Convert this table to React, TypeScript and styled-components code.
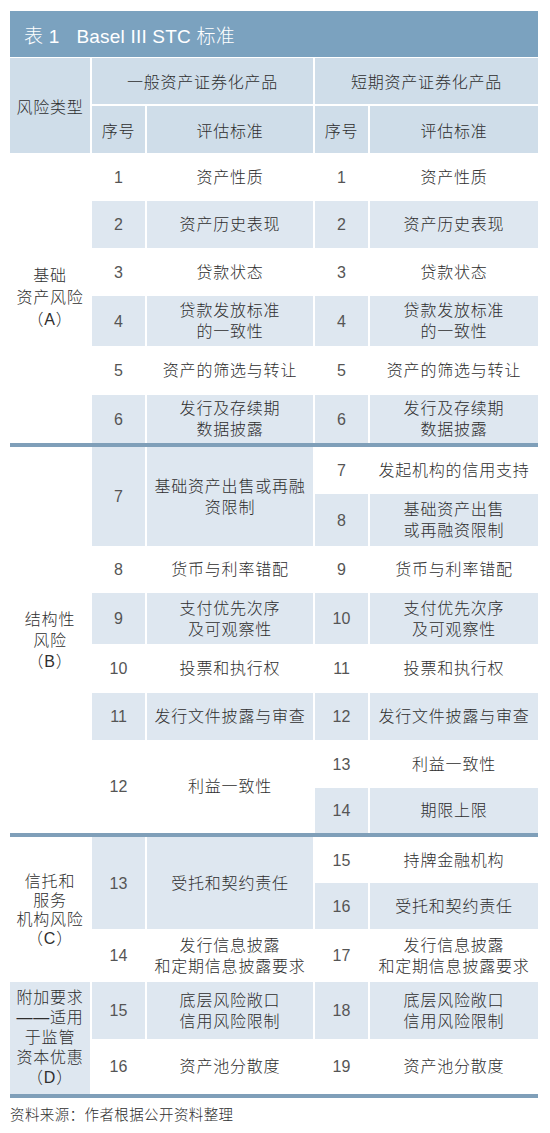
import React from "react";
import styled, { createGlobalStyle } from "styled-components";

const GlobalStyle = createGlobalStyle`
  html, body { margin: 0; padding: 0; background: #ffffff; }
  body { font-family: "Liberation Sans", "Noto Sans CJK SC", sans-serif; color: #333; }
`;

const COLS = "80px 53px 166px 53px 168px";
const SHADE = "#dee7f0";
const HEAD = "#cfdde9";
const RULE = "#7f9fb9";

const Page = styled.div`
  width: 550px;
  padding: 11px 0 0 10px;
  box-sizing: border-box;
`;

const Table = styled.div`
  width: 528px;
  display: flex;
  flex-direction: column;
`;

const TitleBar = styled.div`
  height: 46px;
  background: #7ba2bf;
  color: #ffffff;
  display: flex;
  align-items: center;
  padding-left: 14px;
  font-size: 19px;
  font-weight: 300;
  letter-spacing: 0.2px;
  margin-bottom: 1px;
`;

const TitleGap = styled.span`
  display: inline-block;
  width: 17px;
`;

const HeaderGrid = styled.div`
  display: grid;
  grid-template-columns: ${COLS};
  grid-template-rows: 46px 47px;
  column-gap: 2px;
  row-gap: 2px;
`;

const HeadCell = styled.div<{ $row: string; $col: string }>`
  grid-row: ${(p) => p.$row};
  grid-column: ${(p) => p.$col};
  background: ${HEAD};
  display: flex;
  align-items: center;
  justify-content: center;
  font-size: 16px;
  font-weight: 300;
  letter-spacing: 0.8px;
  color: #2e2e2e;
`;

const Section = styled.div<{ $rows: string }>`
  display: grid;
  grid-template-columns: ${COLS};
  grid-template-rows: ${(p) => p.$rows};
  column-gap: 2px;
`;

const Cell = styled.div<{ $row: string; $col: number; $shade: boolean }>`
  grid-row: ${(p) => p.$row};
  grid-column: ${(p) => p.$col};
  background: ${(p) => (p.$shade ? SHADE : "transparent")};
  display: flex;
  flex-direction: column;
  align-items: center;
  justify-content: center;
  text-align: center;
  font-size: 16px;
  font-weight: 300;
  line-height: 21px;
  letter-spacing: 0.8px;
  color: #2e2e2e;
`;

const NumCell = styled(Cell)`
  font-family: "Liberation Sans", sans-serif;
  font-weight: 400;
  letter-spacing: 0;
  color: #555;
`;

const CatCell = styled(Cell)<{ $lh: number }>`
  line-height: ${(p) => p.$lh}px;
`;

const Rule = styled.div`
  height: 4px;
  background: ${RULE};
`;

const Footer = styled.div`
  margin-top: 5px;
  font-size: 14.5px;
  font-weight: 300;
  letter-spacing: 0.4px;
  color: #2e2e2e;
`;

type Entry = { n: string; t: string[]; span: number; shade: boolean };
type Cat = { lines: string[]; span: number; shade: boolean; lh: number };
type Block = { rows: number[]; cats: Cat[]; left: Entry[]; right: Entry[] };

const e = (n: string, t: string, span: number, shade: boolean): Entry => ({
  n,
  t: t.split("\n"),
  span,
  shade,
});

const blocks: Block[] = [
  {
    rows: [48, 47, 48, 50, 49, 48],
    cats: [{ lines: ["基础", "资产风险", "（A）"], span: 6, shade: false, lh: 22 }],
    left: [
      e("1", "资产性质", 1, false),
      e("2", "资产历史表现", 1, true),
      e("3", "贷款状态", 1, false),
      e("4", "贷款发放标准\n的一致性", 1, true),
      e("5", "资产的筛选与转让", 1, false),
      e("6", "发行及存续期\n数据披露", 1, true),
    ],
    right: [
      e("1", "资产性质", 1, false),
      e("2", "资产历史表现", 1, true),
      e("3", "贷款状态", 1, false),
      e("4", "贷款发放标准\n的一致性", 1, true),
      e("5", "资产的筛选与转让", 1, false),
      e("6", "发行及存续期\n数据披露", 1, true),
    ],
  },
  {
    rows: [47, 52, 47, 51, 49, 47, 48, 45],
    cats: [{ lines: ["结构性", "风险", "（B）"], span: 8, shade: false, lh: 21 }],
    left: [
      e("7", "基础资产出售或再融\n资限制", 2, true),
      e("8", "货币与利率错配", 1, false),
      e("9", "支付优先次序\n及可观察性", 1, true),
      e("10", "投票和执行权", 1, false),
      e("11", "发行文件披露与审查", 1, true),
      e("12", "利益一致性", 2, false),
    ],
    right: [
      e("7", "发起机构的信用支持", 1, false),
      e("8", "基础资产出售\n或再融资限制", 1, true),
      e("9", "货币与利率错配", 1, false),
      e("10", "支付优先次序\n及可观察性", 1, true),
      e("11", "投票和执行权", 1, false),
      e("12", "发行文件披露与审查", 1, true),
      e("13", "利益一致性", 1, false),
      e("14", "期限上限", 1, true),
    ],
  },
  {
    rows: [46, 46, 53, 57, 55],
    cats: [
      { lines: ["信托和", "服务", "机构风险", "（C）"], span: 3, shade: false, lh: 19 },
      { lines: ["附加要求", "——适用", "于监管", "资本优惠", "（D）"], span: 2, shade: true, lh: 20 },
    ],
    left: [
      e("13", "受托和契约责任", 2, true),
      e("14", "发行信息披露\n和定期信息披露要求", 1, false),
      e("15", "底层风险敞口\n信用风险限制", 1, true),
      e("16", "资产池分散度", 1, false),
    ],
    right: [
      e("15", "持牌金融机构", 1, false),
      e("16", "受托和契约责任", 1, true),
      e("17", "发行信息披露\n和定期信息披露要求", 1, false),
      e("18", "底层风险敞口\n信用风险限制", 1, true),
      e("19", "资产池分散度", 1, false),
    ],
  },
];

function renderEntries(entries: Entry[], numCol: number, prefix: string) {
  let r = 1;
  const out: React.ReactNode[] = [];
  entries.forEach((en, i) => {
    const row = `${r} / span ${en.span}`;
    out.push(
      <NumCell key={`${prefix}n${i}`} $row={row} $col={numCol} $shade={en.shade}>
        {en.n}
      </NumCell>
    );
    out.push(
      <Cell key={`${prefix}t${i}`} $row={row} $col={numCol + 1} $shade={en.shade}>
        {en.t.map((l, j) => (
          <span key={j}>{l}</span>
        ))}
      </Cell>
    );
    r += en.span;
  });
  return out;
}

function BlockView({ b }: { b: Block }) {
  let r = 1;
  return (
    <Section $rows={b.rows.map((h) => `${h}px`).join(" ")}>
      {b.cats.map((c, i) => {
        const row = `${r} / span ${c.span}`;
        r += c.span;
        return (
          <CatCell key={`c${i}`} $row={row} $col={1} $shade={c.shade} $lh={c.lh}>
            {c.lines.map((l, j) => (
              <span key={j}>{l}</span>
            ))}
          </CatCell>
        );
      })}
      {renderEntries(b.left, 2, "l")}
      {renderEntries(b.right, 4, "r")}
    </Section>
  );
}

export default function App() {
  return (
    <>
      <GlobalStyle />
      <Page>
        <Table>
          <TitleBar>
            表 1<TitleGap />Basel III STC 标准
          </TitleBar>
          <HeaderGrid>
            <HeadCell $row="1 / span 2" $col="1">风险类型</HeadCell>
            <HeadCell $row="1" $col="2 / span 2">一般资产证券化产品</HeadCell>
            <HeadCell $row="1" $col="4 / span 2">短期资产证券化产品</HeadCell>
            <HeadCell $row="2" $col="2">序号</HeadCell>
            <HeadCell $row="2" $col="3">评估标准</HeadCell>
            <HeadCell $row="2" $col="4">序号</HeadCell>
            <HeadCell $row="2" $col="5">评估标准</HeadCell>
          </HeaderGrid>
          <BlockView b={blocks[0]} />
          <Rule />
          <BlockView b={blocks[1]} />
          <Rule />
          <BlockView b={blocks[2]} />
          <Rule />
          <Footer>资料来源：作者根据公开资料整理</Footer>
        </Table>
      </Page>
    </>
  );
}
